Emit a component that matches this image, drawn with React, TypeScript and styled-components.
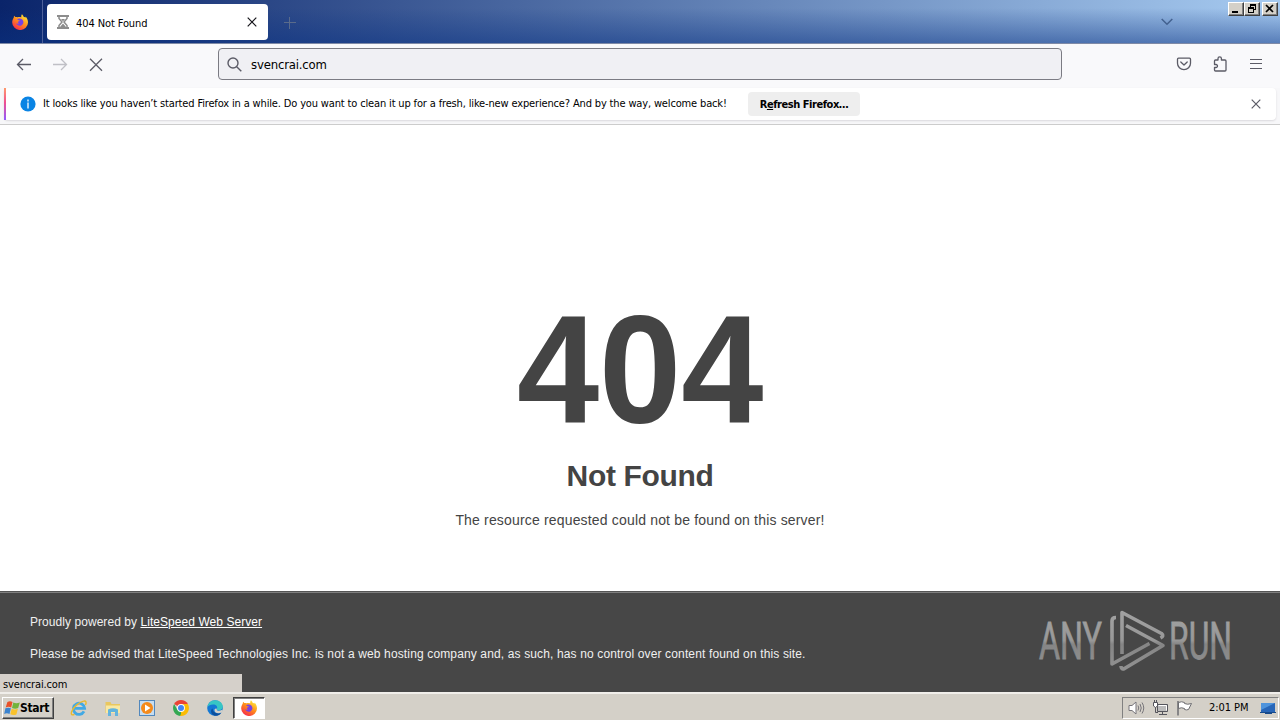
import React from 'react';
import styled, { createGlobalStyle, css } from 'styled-components';

const UI_FONT = '"DejaVu Sans Condensed", "DejaVu Sans", sans-serif';
const PAGE_FONT = '"Liberation Sans", Arial, sans-serif';

const Colors = {
    toolbar: '#f9f9fb',
    icon: '#5b5b66',
    face: '#d4d0c8',
    dark: '#444444',
};

const GlobalStyle = createGlobalStyle`
    * { box-sizing: border-box; }
    body {
        margin: 0;
        overflow: hidden;
        background: #fff;
    }
    svg { display: block; flex: none; }
`;

const Screen = styled.div`
    width: 1280px;
    height: 720px;
    display: flex;
    flex-direction: column;
    position: relative;
    font-family: ${UI_FONT};
    font-size: 11px;
    color: #000;
    white-space: nowrap;
`;

const TabStrip = styled.div`
    height: 44px;
    flex: none;
    display: flex;
    align-items: flex-start;
    background:
        linear-gradient(180deg, rgba(10, 36, 106, 0) 0, rgba(10, 36, 106, 0) 8px, rgba(10, 50, 130, 0.5) 43px),
        linear-gradient(90deg, #0a246a 0%, #a6caf0 100%);
    border-bottom: 1px solid #7f8aa6;
`;

const FirefoxView = styled.div`
    width: 43px;
    height: 43px;
    padding: 14px 0 0 12px;
    border-right: 1px solid #4d609a;
`;

const Tab = styled.div`
    width: 221px;
    height: 36px;
    margin: 4px 0 0 4px;
    padding: 0 11px 0 9px;
    display: flex;
    align-items: center;
    border-radius: 4px;
    background: #fff;
`;

const TabTitle = styled.span`
    flex: 1;
    margin-left: 6px;
    padding-top: 2px;
    letter-spacing: -0.1px;
`;

const NewTab = styled.div`
    margin: 17px 0 0 16px;
`;

const TabsMenu = styled.div`
    margin: 17px 1px 0 auto;
`;

const WindowButtons = styled.div`
    display: flex;
    margin: 2px 2px 0 54px;
`;

const WindowButton = styled.div<{ gap?: boolean }>`
    width: 16px;
    height: 14px;
    margin-left: ${({ gap }) => (gap ? 2 : 0)}px;
    background: ${Colors.face};
    border: 1px solid;
    border-color: #fff #404040 #404040 #fff;
    box-shadow: inset -1px -1px 0 #808080;
`;

const NavBar = styled.div`
    height: 44px;
    flex: none;
    display: flex;
    align-items: center;
    padding: 0 16px 4px;
    background: ${Colors.toolbar};
`;

const NavButtons = styled.div<{ gap: number }>`
    display: flex;
    gap: ${({ gap }) => gap}px;
`;

const UrlBar = styled.div`
    width: 844px;
    height: 32px;
    margin: 0 auto 0 114px;
    padding-left: 8px;
    display: flex;
    align-items: center;
    border: 1px solid #7b7b83;
    border-radius: 4px;
    background: #f0f0f4;
    font-size: 13px;
    letter-spacing: -0.18px;
`;

const UrlText = styled.span`
    margin-left: 9px;
    padding-top: 1px;
`;

const NoticeArea = styled.div`
    height: 37px;
    flex: none;
    padding: 0 4px;
    background: #f7f7f9;
    border-bottom: 1px solid #cccccc;
`;

const Notice = styled.div`
    height: 32px;
    display: flex;
    align-items: center;
    border-radius: 4px;
    background: #fff;
    box-shadow: 0 1px 2px rgba(58, 57, 68, 0.15);
    padding-right: 15px;
`;

const NoticeStripe = styled.div`
    width: 2px;
    height: 32px;
    margin-right: 14px;
    background: linear-gradient(#ff9a6c 0%, #f0508f 45%, #9059ff 100%);
`;

const NoticeText = styled.span`
    width: 705px;
    margin-left: 7px;
    padding-bottom: 1px;
    letter-spacing: -0.15px;
`;

const RefreshButton = styled.div`
    width: 112px;
    height: 24px;
    margin-right: auto;
    line-height: 25px;
    text-align: center;
    border-radius: 4px;
    background: #eeeeee;
    font-weight: bold;
    letter-spacing: -0.45px;
`;

const Page = styled.main`
    height: 466px;
    flex: none;
    display: flex;
    flex-direction: column;
    align-items: center;
    padding-top: 169px;
    font-family: ${PAGE_FONT};
    color: ${Colors.dark};
`;

const ErrorCode = styled.h1`
    margin: 0;
    font-size: 150px;
    line-height: 150px;
    font-weight: bold;
    transform: scale(0.985, 1.03);
`;

const ErrorTitle = styled.h2`
    margin: 14px 0 0;
    font-size: 30px;
    line-height: 36px;
    font-weight: bold;
    letter-spacing: -0.35px;
`;

const ErrorText = styled.p`
    margin: 18px 0 0;
    font-size: 14px;
    line-height: 16px;
    letter-spacing: 0.17px;
`;

const PageFooter = styled.footer`
    height: 101px;
    flex: none;
    display: flex;
    justify-content: space-between;
    padding: 18px 46px 0 30px;
    border-top: 1px solid #555;
    box-shadow: inset 0 1px 0 #808080;
    background: #474747;
    color: #f0f0f0;
    font-family: ${PAGE_FONT};
    font-size: 12px;
`;

const FooterText = styled.div`
    padding-top: 4px;
    line-height: 16px;
    a { color: #fff; }
`;

const FooterLine = styled.p<{ spacing: number }>`
    margin: 0 0 16px;
    letter-spacing: ${({ spacing }) => spacing}px;
`;

const StatusBubble = styled.div`
    position: absolute;
    left: 0;
    top: 674px;
    width: 242px;
    height: 18px;
    padding: 4px 3px 0;
    line-height: 14px;
    letter-spacing: -0.15px;
    background: #d5d0ca;
`;

const Taskbar = styled.div`
    height: 28px;
    flex: none;
    display: flex;
    align-items: center;
    padding: 1px 1px 0 2px;
    background: ${Colors.face};
    border-top: 2px solid #f0eeea;
`;

const StartButton = styled.div`
    width: 52px;
    height: 22px;
    display: flex;
    align-items: center;
    padding-left: 1px;
    border: 1px solid;
    border-color: #fff #404040 #404040 #fff;
    box-shadow: inset -1px -1px 0 #808080;
    font-size: 12px;
    font-weight: bold;
    letter-spacing: -0.3px;
`;

const QuickLaunch = styled.div<{ active?: boolean }>`
    width: 32px;
    height: 22px;
    margin-left: 2px;
    display: flex;
    align-items: center;
    justify-content: center;
    ${({ active }) => active && css`
        background: #fff;
        border: 1px solid;
        border-color: #404040 #fff #fff #404040;
        box-shadow: inset 1px 1px 0 #808080;
    `}
`;

const LaunchGroup = styled.div`
    display: flex;
    margin-left: 7px;
`;

const Tray = styled.div`
    width: 157px;
    height: 22px;
    margin-left: auto;
    padding: 0 2px 0 5px;
    display: flex;
    align-items: center;
    border: 1px solid;
    border-color: #808080 #fff #fff #808080;
`;

const TrayIcons = styled.div`
    display: flex;
    gap: 7px;
`;

const Clock = styled.span`
    flex: 1;
    margin-left: 16px;
    letter-spacing: -0.05px;
`;

const FirefoxLogo = ({ size = 16, id }: { size?: number; id: string }) => (
    <svg width={size} height={size} viewBox='0 0 16 16'>
        <defs>
            <linearGradient id={id} x1='0.8' y1='0.1' x2='0.2' y2='1'>
                <stop offset='0' stopColor='#ffe135' />
                <stop offset='0.45' stopColor='#ff8a1c' />
                <stop offset='1' stopColor='#f5224f' />
            </linearGradient>
        </defs>
        <path
            fill={`url(#${id})`}
            d='M10 0.2c1 1 1.6 2 1.8 2.8 1-.2 1.2.2 1.6.7.2-.4.2-.8.1-1.1C15.200 4.200 16 6.200 16 8.300A7.900 7.700 0 0 1 .2 8.400C.2 6.500.8 5 1.700 3.700c0-.8.3-1.500.7-1.900l.8 1.300c.8-.3 1.600-.2 2.200.1C7 3 8.500 3 9.200 3.500 9.200 2 9.400.9 10 .2z'
        />
        <path fill='#7542e5' d='M5 5.400c1.500-1.200 4-1.100 5.500.4 1.500 1.700 1.200 4.300-.8 5.500-2.200 1.200-5 .1-5.500-2 1 .7 2.200.5 3-.2-.9-.1-1.500-.8-1.300-1.400.8-.3 1.800-.4 2-1C7.100 6.600 6 5.500 5 5.400z' />
    </svg>
);

const CloseIcon = ({ size, color = Colors.icon }: { size: number; color?: string }) => (
    <svg width={size} height={size} viewBox='0 0 10 10' fill='none' stroke={color} strokeWidth={12 / size}>
        <path d='M.7.7l8.600 8.600M9.300.7L.7 9.300' />
    </svg>
);

const Hourglass = () => (
    <svg width='14' height='16' viewBox='0 0 14 16' fill='none' stroke='#8c8c8c'>
        <path strokeWidth='2' d='M1 2h12M1 14h12' />
        <path strokeWidth='1.500' d='M3 2v2.500L6 8l-3 3.500V14M11 2v2.500L8 8l3 3.500V14' />
        <path fill='#8c8c8c' stroke='none' d='M5 5h4L7 7.500zM4 13l3-3.500 3 3.500z' />
    </svg>
);

const Arrow = ({ color, flip }: { color: string; flip?: boolean }) => (
    <svg width='16' height='16' viewBox='0 0 16 16' fill='none' stroke={color} strokeWidth='1.300'>
        <path transform={flip ? 'matrix(-1 0 0 1 16 0)' : undefined} d='M15 8.500H1.500M7 3L1.500 8.500 7 14' />
    </svg>
);

const AnyRunLogo = () => (
    <svg width='196' height='64' viewBox='1038 610 196 64'>
        <defs>
            <linearGradient id='anyrun' x1='0' y1='610' x2='0' y2='671' gradientUnits='userSpaceOnUse'>
                <stop offset='0' stopColor='#a2a2a2' />
                <stop offset='0.5' stopColor='#989898' />
                <stop offset='0.56' stopColor='#858585' />
                <stop offset='1' stopColor='#929292' />
            </linearGradient>
        </defs>
        <g fill='url(#anyrun)' stroke='url(#anyrun)' strokeWidth='0.8' fontFamily='Roboto, sans-serif' fontSize='52'>
            <text x='1039' y='659' textLength='63' lengthAdjust='spacingAndGlyphs'>ANY</text>
            <text x='1169' y='659' textLength='63' lengthAdjust='spacingAndGlyphs'>RUN</text>
        </g>
        <g fill='none' stroke='url(#anyrun)' strokeWidth='3.600' strokeLinejoin='round'>
            <path d='M1122 654V612.500L1161.500 633.500Q1164.500 636 1160.500 638' />
            <path d='M1116 617.500Q1112 617.500 1112 621V664L1149.500 643.500' />
            <path d='M1126 625.500L1163 645.500 1124.500 668.500Q1121 670 1121 666' />
        </g>
    </svg>
);

const MinimizeGlyph = () => (
    <svg width='14' height='12'><path d='M3 9h6' stroke='#000' strokeWidth='2' /></svg>
);

const RestoreGlyph = () => (
    <svg width='14' height='12' fill='none' stroke='#000' shapeRendering='crispEdges'>
        <path d='M5 2h6M5.500 2v3M10.500 2v5M8 6.500h3M3 5h6M3.500 5v5M8.500 5v5M3 9.500h6' />
        <path d='M5 1.500h6M3 4.500h6' />
    </svg>
);

const CloseGlyph = () => (
    <svg width='14' height='12'><path d='M3 2l7 7M10 2L3 9' stroke='#000' strokeWidth='1.700' /></svg>
);

const WindowsFlag = () => (
    <svg width='16' height='16' viewBox='0 0 16 16'>
        <path fill='#e8512a' d='M3.400 2Q6 .5 8.500 2L7.200 7.500Q4.500 6 1.700 7.400z' />
        <path fill='#72b33b' d='M9.300 2.500q3 1.500 6.500 0l-1.600 5.500q-3 1.300-6.200 0z' />
        <path fill='#3b83cf' d='M1.400 8.300q2.800-1.300 5.500 0L5.500 13.900q-2.700-1.500-5.300 0z' />
        <path fill='#f9c22d' d='M7.700 8.800q3 1.300 6.200 0l-1.500 5.600q-3 1.300-6.100-.2z' />
    </svg>
);

const ExplorerLogo = () => (
    <svg width='18' height='18' viewBox='0 0 18 18' fill='none'>
        <path stroke='#42a9e4' strokeWidth='2.800' d='M14 12.400A5.600 5.600 0 1 1 14.600 9.300H5' />
        <path stroke='#e8b92e' strokeWidth='1.400' d='M15.500 6c1.300-2.800.5-4.500-1.900-3.900C9 3 2.500 9 1.500 13c-.7 2.600.6 3.500 3 2.400' />
    </svg>
);

const FolderIcon = () => (
    <svg width='18' height='18' viewBox='0 0 18 18'>
        <path fill='#e9c75f' d='M1.500 3h5l1 2H16v9H1.500z' />
        <path fill='#f9e8a2' d='M2 6.500h14V14H2z' />
        <path fill='#63b4dd' d='M4 10.500q5-2.500 10 0V17h-3v-4H7v4H4z' />
    </svg>
);

const MediaIcon = () => (
    <svg width='18' height='18' viewBox='0 0 18 18'>
        <rect x='1.500' y='1.500' width='15' height='15' fill='#c6ddf1' stroke='#5288bd' />
        <circle cx='9' cy='9' r='6' fill='#f48a1b' />
        <path fill='#fff' d='M7 5.500l5.500 3.500L7 12.500z' />
    </svg>
);

const ChromeLogo = () => (
    <svg width='16' height='16' viewBox='0 0 16 16'>
        <path fill='#ea4335' d='M8 8L1.100 4A8 8 0 0 1 14.900 4z' />
        <path fill='#fbbc05' d='M8 8V4h6.900A8 8 0 0 1 8 16z' />
        <path fill='#34a853' d='M8 8v8A8 8 0 0 1 1.100 4l3.400 6z' />
        <path fill='#fbbc05' d='M11.500 10L8 16H7l3-6z' />
        <circle cx='8' cy='8' r='3.900' fill='#fff' />
        <circle cx='8' cy='8' r='3' fill='#4285f4' />
    </svg>
);

const EdgeLogo = () => (
    <svg width='16' height='16' viewBox='0 0 16 16'>
        <circle cx='8' cy='8' r='7.800' fill='#1478d4' />
        <path fill='#37c6c4' d='M.5 7C1 3 4 .2 8 .2c4.700 0 7.800 3.300 7.800 6.300 0 2.500-1.800 3.800-3.900 3.800-1.500 0-2.400-.6-2-1.300C11 6.500 9 4.500 6 4.500 3.500 4.500 1.300 5.500.5 7z' />
        <path fill='#0b4f9e' d='M5.600 8.500c0 3.500 3.600 5.800 8.500 4.400C12 16 8.500 16 7 15.500 3.500 14 3.400 9.500 5.600 8.500z' />
        <path fill='#d4d0c8' d='M9.700 8.800c-.5 2 2.300 2.700 5 1.300l1.300.5-1.500 2c-3.500 1.500-7 .3-7-2.300 0-1.100 1-2.200 2.200-1.500z' />
    </svg>
);

const SpeakerIcon = () => (
    <svg width='17' height='16' viewBox='0 0 17 16' fill='none' stroke='#77757a'>
        <path fill='#fff' d='M1 5.500h3L8 2v12l-4-3.500H1z' />
        <path d='M10 5.500q1.500 2.500 0 5M12 4q2.500 4 0 8M14 2.500q3.500 5.500 0 11' />
    </svg>
);

const NetworkIcon = () => (
    <svg width='17' height='16' viewBox='0 0 17 16' fill='none' stroke='#55555c'>
        <path fill='#bbb' d='M5.500 4.500h10v7h-10z' />
        <path stroke='#fff' d='M6.500 5.500h8v5' />
        <path d='M10.500 12v2M7 14.500h8M3.500 7v5.500H6' />
        <path fill='#fff' d='M1.500 2.500h4V6l-2 1.500-2-1.500zM2.500 0v2M4.500 0v2' />
    </svg>
);

const FlagIcon = () => (
    <svg width='17' height='16' viewBox='0 0 17 16' stroke='#6e6e72'>
        <path fill='#fff' d='M2.500 2.500q3-1.500 6 0v1q3 1.500 7 0l-3 6q-2 .8-4 0v-1q-3-1.500-6 0z' />
        <path strokeWidth='1.500' d='M2 1v14.500' />
    </svg>
);

const DesktopIcon = () => (
    <svg width='16' height='16' viewBox='0 0 16 16'>
        <path fill='#2866b8' d='M1 3h14v9H1z' />
        <path fill='#4f94dc' d='M1 3h14L1 10z' />
        <path fill='#174a8b' d='M0 12h16v1H0zM5 13h7v1H5z' />
    </svg>
);

const BrowserTabs = () => (
    <TabStrip>
        <FirefoxView><FirefoxLogo id='fx-view' /></FirefoxView>
        <Tab>
            <Hourglass />
            <TabTitle>404 Not Found</TabTitle>
            <CloseIcon size={10} color='#15141a' />
        </Tab>
        <NewTab>
            <svg width='12' height='12' stroke='#5a6b8b'><path d='M5.500 0v12M0 5.500h12' /></svg>
        </NewTab>
        <TabsMenu>
            <svg width='12' height='10' fill='none' stroke='#43618f' strokeWidth='1.500'><path d='M.7 2L6 7.300 11.300 2' /></svg>
        </TabsMenu>
        <WindowButtons>
            <WindowButton><MinimizeGlyph /></WindowButton>
            <WindowButton><RestoreGlyph /></WindowButton>
            <WindowButton gap><CloseGlyph /></WindowButton>
        </WindowButtons>
    </TabStrip>
);

const BrowserNav = () => (
    <NavBar>
        <NavButtons gap={20}>
            <Arrow color={Colors.icon} />
            <Arrow color='#c0c0c6' flip />
            <svg width='16' height='16' fill='none' stroke={Colors.icon} strokeWidth='1.300'>
                <path d='M2 2.700l12 12M14 2.700l-12 12' />
            </svg>
        </NavButtons>
        <UrlBar>
            <svg width='15' height='15' fill='none' stroke={Colors.icon} strokeWidth='1.400'>
                <circle cx='6' cy='6' r='5' />
                <path d='M9.700 9.700l4.600 4.600' />
            </svg>
            <UrlText>svencrai.com</UrlText>
        </UrlBar>
        <NavButtons gap={20}>
            <svg width='16' height='16' fill='none' stroke={Colors.icon} strokeWidth='1.300' strokeLinecap='round' strokeLinejoin='round'>
                <path d='M2.500 2.200h11q1 0 1 1v4a6.500 6.500 0 0 1-13 0v-4q0-1 1-1z' />
                <path d='M4.800 6L8 9l3.200-3' />
            </svg>
            <svg width='16' height='16' fill='none' stroke={Colors.icon} strokeWidth='1.300' strokeLinejoin='round'>
                <path d='M2.500 8.500V5q0-1 1-1H6V2.500a1.700 1.700 0 0 1 3.400 0V4H13q1 0 1 1v9q0 1-1 1H3.500q-1 0-1-1v-2.500H4a1.500 1.500 0 0 0 0-3z' />
            </svg>
            <svg width='16' height='16' stroke={Colors.icon} strokeWidth='1.200'>
                <path d='M2 3.500h12M2 7.500h12M2 12.500h12' />
            </svg>
        </NavButtons>
    </NavBar>
);

const App = () => (
    <>
        <GlobalStyle />
        <Screen>
            <BrowserTabs />
            <BrowserNav />
            <NoticeArea>
                <Notice>
                    <NoticeStripe />
                    <svg width='16' height='16'>
                        <circle cx='8' cy='8' r='7.600' fill='#0a84e4' />
                        <path d='M8 3.500v2M8 6.500v6' stroke='#fff' strokeWidth='1.300' />
                    </svg>
                    <NoticeText>
                        It looks like you haven’t started Firefox in a while. Do you want to clean it up for a fresh, like-new experience? And by the way, welcome back!
                    </NoticeText>
                    <RefreshButton>R<u>e</u>fresh Firefox…</RefreshButton>
                    <CloseIcon size={10} />
                </Notice>
            </NoticeArea>
            <Page>
                <ErrorCode>404</ErrorCode>
                <ErrorTitle>Not Found</ErrorTitle>
                <ErrorText>The resource requested could not be found on this server!</ErrorText>
            </Page>
            <PageFooter>
                <FooterText>
                    <FooterLine spacing={0.055}>Proudly powered by <a href='#'>LiteSpeed Web Server</a></FooterLine>
                    <FooterLine spacing={0.137}>
                        Please be advised that LiteSpeed Technologies Inc. is not a web hosting company and, as such, has no control over content found on this site.
                    </FooterLine>
                </FooterText>
                <AnyRunLogo />
            </PageFooter>
            <Taskbar>
                <StartButton><WindowsFlag />Start</StartButton>
                <LaunchGroup>
                    <QuickLaunch><ExplorerLogo /></QuickLaunch>
                    <QuickLaunch><FolderIcon /></QuickLaunch>
                    <QuickLaunch><MediaIcon /></QuickLaunch>
                    <QuickLaunch><ChromeLogo /></QuickLaunch>
                    <QuickLaunch><EdgeLogo /></QuickLaunch>
                    <QuickLaunch active><FirefoxLogo id='fx-task' /></QuickLaunch>
                </LaunchGroup>
                <Tray>
                    <TrayIcons>
                        <SpeakerIcon />
                        <NetworkIcon />
                        <FlagIcon />
                    </TrayIcons>
                    <Clock>2:01 PM</Clock>
                    <DesktopIcon />
                </Tray>
            </Taskbar>
            <StatusBubble>svencrai.com</StatusBubble>
        </Screen>
    </>
);

export default App;
